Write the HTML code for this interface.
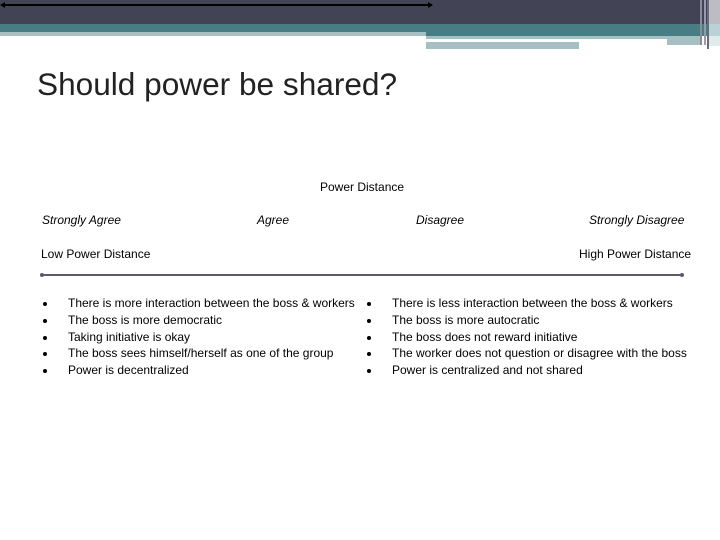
<html><head><style>
body{margin:0;width:720px;height:540px;background:#fff;position:relative;overflow:hidden;font-family:"Liberation Sans",sans-serif;color:#000}
div{position:absolute}
.t{font-size:12px;white-space:nowrap}
.i{font-style:italic}
ul{position:absolute;margin:0;padding:0;list-style:none;font-size:12px;line-height:16.8px}
li{position:relative;white-space:nowrap}
li:before{content:"";position:absolute;left:-25px;top:7px;width:4px;height:4px;border-radius:50%;background:#000}
</style></head><body>
<div style="left:0;top:0;width:720px;height:24px;background:#434356"></div>
<div style="left:0;top:24px;width:720px;height:8px;background:#467e84"></div>
<div style="left:0;top:32px;width:426px;height:4px;background:#a5bfc3"></div>
<div style="left:426px;top:32px;width:294px;height:4px;background:#467e84"></div>
<div style="left:426px;top:36px;width:274px;height:3px;background:#a5bfc3"></div>
<div style="left:426px;top:39px;width:241px;height:3px;background:#fff"></div>
<div style="left:667px;top:39px;width:33px;height:6px;background:#a5bfc3"></div>
<div style="left:426px;top:42px;width:153px;height:7px;background:#a5bfc3"></div>
<div style="left:700px;top:0;width:2px;height:45px;background:#8c8c9c"></div>
<div style="left:704px;top:0;width:2px;height:45px;background:#9a9aaa"></div>
<div style="left:707px;top:0;width:2px;height:49px;background:#6a6a78"></div>
<div style="left:709px;top:0;width:11px;height:24px;background:#bdbbc4"></div>
<div style="left:709px;top:24px;width:11px;height:12px;background:#b8d2d5"></div>
<div style="left:709px;top:36px;width:11px;height:10px;background:#e0ecec"></div>
<div style="left:2px;top:4px;width:430px;height:2px;background:#000"></div>
<div style="left:0;top:2px;width:5px;height:6px;background:#000;clip-path:polygon(0 50%,100% 0,100% 100%)"></div>
<div style="left:428px;top:2px;width:5px;height:6px;background:#000;clip-path:polygon(100% 50%,0 0,0 100%)"></div>
<div style="left:37px;top:66px;font-size:31.6px;color:#222;white-space:nowrap">Should power be shared?</div>
<div class="t" style="left:320px;top:180px">Power Distance</div>
<div class="t i" style="left:42px;top:213px">Strongly Agree</div>
<div class="t i" style="left:257px;top:213px">Agree</div>
<div class="t i" style="left:416px;top:213px">Disagree</div>
<div class="t i" style="left:589px;top:213px">Strongly Disagree</div>
<div class="t" style="left:41px;top:247px">Low Power Distance</div>
<div class="t" style="left:579px;top:247px">High Power Distance</div>
<div style="left:41px;top:274px;width:642px;height:2px;background:#5a5a70"></div>
<div style="left:40px;top:273px;width:4px;height:4px;border-radius:50%;background:#5a5a70"></div>
<div style="left:680px;top:273px;width:4px;height:4px;border-radius:50%;background:#5a5a70"></div>
<ul style="left:68px;top:295px"><li>There is more interaction between the boss &amp; workers</li><li>The boss is more democratic</li><li>Taking initiative is okay</li><li>The boss sees himself/herself as one of the group</li><li>Power is decentralized</li></ul>
<ul style="left:392px;top:295px"><li>There is less interaction between the boss &amp; workers</li><li>The boss is more autocratic</li><li>The boss does not reward initiative</li><li>The worker does not question or disagree with the boss</li><li>Power is centralized and not shared</li></ul>
</body></html>
